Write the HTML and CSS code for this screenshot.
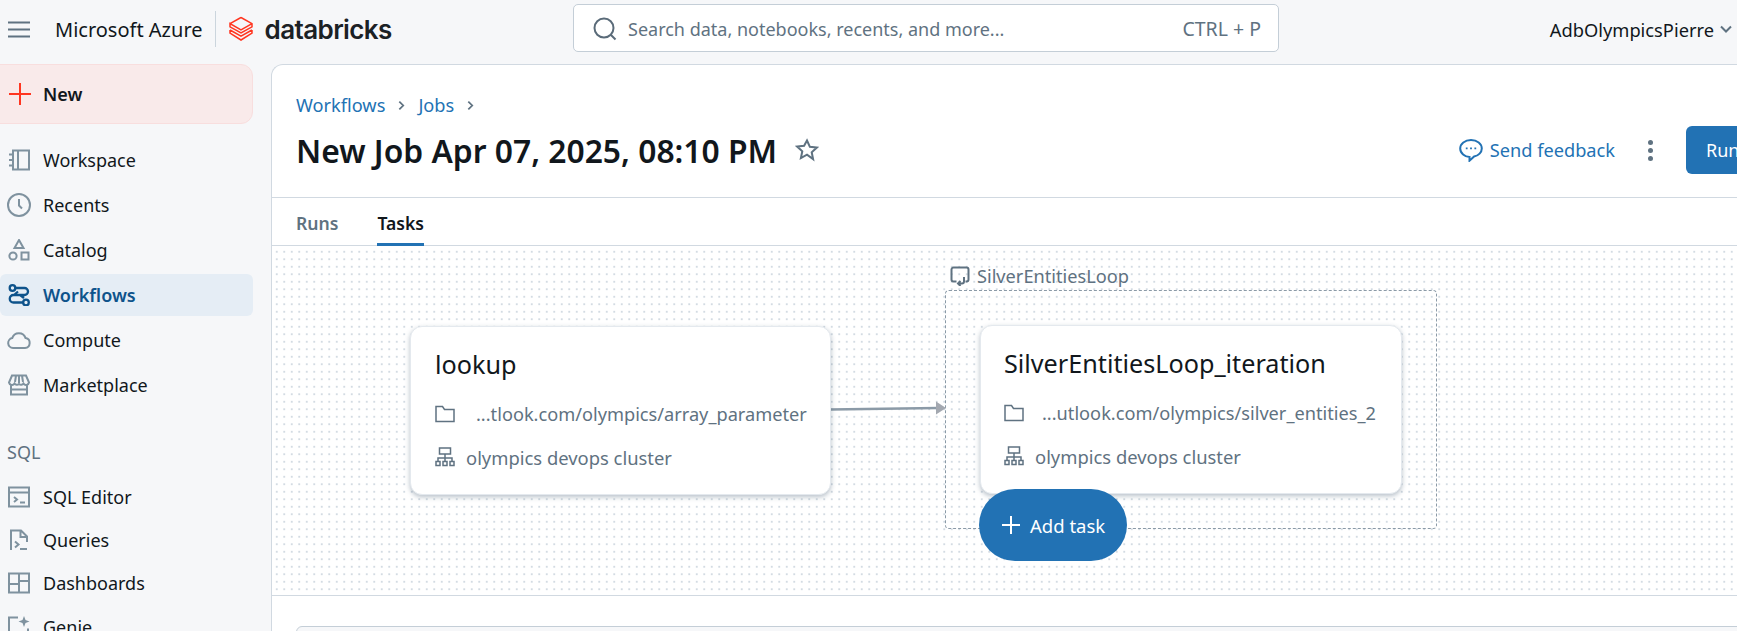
FILE: index.html
```html
<!DOCTYPE html>
<html lang="en">
<head>
  <meta charset="UTF-8" />
  <title>New Job Apr 07, 2025, 08:10 PM</title>
  <link rel="stylesheet" href="styles.css">
</head>
<body>
  <header class="topbar">
    <svg class="menu-icon" viewBox="0 0 22 17"><path d="M0 1.500h22M0 8.500h22M0 15.500h22"/></svg>
    <span class="azure">Microsoft Azure</span>
    <span class="divider"></span>
    <svg class="logo-icon" viewBox="0 0 24 26"><path d="M12 1.500 23 7.600v3.200L12 17 1 10.800V7.600L12 13.800 23 7.600M1 7.600 12 1.500M1 14l11 6.200L23 14M1 14v3.200l11 6.800 11-6.800V14"/></svg>
    <span class="brand">databricks</span>
    <div class="search">
      <svg class="search-icon" viewBox="0 0 24 24"><circle cx="11" cy="11" r="9.500"/><path d="m18 18 4.500 4.500"/></svg>
      <span class="search-text">Search data, notebooks, recents, and more...</span>
      <span class="search-key">CTRL + P</span>
    </div>
    <div class="user">
      <span>AdbOlympicsPierre</span>
      <svg class="user-chevron" viewBox="0 0 12 8"><path d="m1 1.500 5 5 5-5"/></svg>
    </div>
  </header>

  <div class="layout">
    <nav class="sidebar">
      <div class="new-btn">
        <svg class="new-plus" viewBox="0 0 22 22"><path d="M11 0v22M0 11h22"/></svg>
        <span>New</span>
      </div>

      <a class="nav-item">
        <svg class="nav-icon" viewBox="0 0 22 22"><path d="M5 1.500h16v19H5zM10 1.500v19M1 5.500h4M1 11h4M1 16.500h4"/></svg>
        <span>Workspace</span>
      </a>
      <a class="nav-item">
        <svg class="nav-icon large" viewBox="0 0 24 24"><circle cx="12" cy="12" r="11"/><path d="M12 6v6.500l3 3"/></svg>
        <span>Recents</span>
      </a>
      <a class="nav-item">
        <svg class="nav-icon" viewBox="0 0 22 22"><path d="m11 1 4.500 8h-9zM13.500 13.500h7v7h-7z"/><circle cx="5" cy="17" r="3.600"/></svg>
        <span>Catalog</span>
      </a>
      <a class="nav-item active">
        <svg class="nav-icon" viewBox="0 0 22 22"><circle cx="4.500" cy="4" r="2.800"/><circle cx="18" cy="18.500" r="2.800"/><path d="M7.500 4h9a3.500 3.500 0 0 1 0 7h-11a3.700 3.700 0 0 0 0 7.500h9.500M6 11l4-3.500M12 11l4 3"/></svg>
        <span>Workflows</span>
      </a>
      <a class="nav-item">
        <svg class="nav-icon large" viewBox="0 -3 24 24"><path d="M6 17a5 5 0 0 1-.8-9.900 7 7 0 0 1 13.400 0A5 5 0 0 1 18 17z"/></svg>
        <span>Compute</span>
      </a>
      <a class="nav-item">
        <svg class="nav-icon" viewBox="0 0 22 22"><path d="M4 1.500h14l3 7a3 3 0 0 1-5.500 1 3 3 0 0 1-4.500.5 3 3 0 0 1-4.500-.5A3 3 0 0 1 1 8.500zM3 11v9.500h16V11M3 15.500h16M8 1.500 7 8M14 1.500 15 8M11 1.500V9"/></svg>
        <span>Marketplace</span>
      </a>

      <div class="nav-heading">SQL</div>

      <a class="nav-item compact">
        <svg class="nav-icon" viewBox="0 0 22 22"><path d="M1 1.500h20v19H1zM1 6.500h20M6 11l3 2.500-3 2.500M12 16.500h5"/></svg>
        <span>SQL Editor</span>
      </a>
      <a class="nav-item compact">
        <svg class="nav-icon" viewBox="0 0 22 22"><path d="M3 21V1.500h10l6 6V13M12.500 1.500V8H19M7 12.500l3.500 3-3.500 3M12 20h7"/></svg>
        <span>Queries</span>
      </a>
      <a class="nav-item compact">
        <svg class="nav-icon" viewBox="0 0 22 22"><path d="M1 1.500h20v19H1zM11 1.500v19M1 12h10M11 9h10"/></svg>
        <span>Dashboards</span>
      </a>
      <a class="nav-item compact">
        <svg class="nav-icon" viewBox="0 0 22 22"><path d="M10 1.500H1v19h19v-8"/><path class="solid" d="m16 0 1.500 4L21.500 5.500 17.500 7 16 11l-1.500-4-4-1.500 4-1.500z"/></svg>
        <span>Genie</span>
      </a>
    </nav>

    <main class="main">
      <section class="job-header">
        <div class="crumbs">
          <a>Workflows</a>
          <svg class="crumb-sep" viewBox="0 0 8 12"><path d="m1.500 1.500 4.500 4.500-4.500 4.500"/></svg>
          <a>Jobs</a>
          <svg class="crumb-sep" viewBox="0 0 8 12"><path d="m1.500 1.500 4.500 4.500-4.500 4.500"/></svg>
        </div>
        <div class="title-row">
          <h1>New Job Apr 07, 2025, 08:10 PM</h1>
          <svg class="star" viewBox="0 0 24 24"><path d="m12 2.500 2.900 6.300 6.900.8-5.100 4.700 1.400 6.800L12 16.700l-6.100 3.400 1.400-6.800-5.100-4.700 6.900-.8z"/></svg>
          <div class="actions">
            <svg class="feedback-icon" viewBox="0 0 24 24"><path d="M12 2C5.900 2 1.200 5.700 1.200 10.500c0 4.700 4.700 8.400 9.300 8.400v3.800l4.600-4.200c4.400-.9 7.700-4.200 7.700-8C22.800 5.700 18.100 2 12 2z"/><path class="solid" d="M6.800 9.500h1.800v1.800H6.800zM11.100 9.500h1.800v1.800h-1.800zM15.400 9.500h1.800v1.800h-1.800z"/></svg>
            <a class="feedback">Send feedback</a>
            <span class="kebab"><i></i><i></i><i></i></span>
            <button class="run-btn">Run now</button>
          </div>
        </div>
      </section>

      <div class="tabs">
        <a class="tab">Runs</a>
        <a class="tab current">Tasks</a>
      </div>

      <section class="canvas">
        <div class="loop-label">
          <svg class="loop-icon" viewBox="0 0 20 20"><path d="M6.500 15.500H3.500a2 2 0 0 1-2-2V3.500a2 2 0 0 1 2-2h13a2 2 0 0 1 2 2v10a2 2 0 0 1-2 2h-1M14 11v4.500a2 2 0 0 1-2 2H8M10.500 15 8 17.500l2.500 2.500"/></svg>
          <span>SilverEntitiesLoop</span>
        </div>
        <div class="loop-box"></div>

        <svg class="edge" viewBox="0 0 120 14"><path d="M0 8.500 108 7"/><path class="head" d="m106 0.500 10 6.500-10 6.500z"/></svg>

        <article class="task node-lookup">
          <h2>lookup</h2>
          <div class="task-row first">
            <svg class="task-icon" viewBox="0 0 20 18"><path d="M1 16.500V1.500h6.500l2 3H19v12z"/></svg>
            <span class="path">...tlook.com/olympics/array_parameter</span>
          </div>
          <div class="task-row">
            <svg class="task-icon" viewBox="0 0 20 20"><path d="M4.500 1h11v6h-11zM10 7v4M3 14v-3h14v3M10 11v3"/><path d="M1 14.500h4v4H1zM8 14.500h4v4H8zM15 14.500h4v4h-4z"/></svg>
            <span class="cluster">olympics devops cluster</span>
          </div>
        </article>

        <article class="task node-iteration">
          <h2>SilverEntitiesLoop_iteration</h2>
          <div class="task-row first">
            <svg class="task-icon" viewBox="0 0 20 18"><path d="M1 16.500V1.500h6.500l2 3H19v12z"/></svg>
            <span class="path">...utlook.com/olympics/silver_entities_2</span>
          </div>
          <div class="task-row">
            <svg class="task-icon" viewBox="0 0 20 20"><path d="M4.500 1h11v6h-11zM10 7v4M3 14v-3h14v3M10 11v3"/><path d="M1 14.500h4v4H1zM8 14.500h4v4H8zM15 14.500h4v4h-4z"/></svg>
            <span class="cluster">olympics devops cluster</span>
          </div>
        </article>

        <button class="add-task">
          <svg class="add-plus" viewBox="0 0 18 18"><path d="M9 0v18M0 9h18"/></svg>
          <span>Add task</span>
        </button>
      </section>

      <section class="below">
        <div class="details-box"></div>
      </section>
    </main>
  </div>
</body>
</html>
```

FILE: styles.css
```css
* {
  box-sizing: border-box;
}
html, body {
  height: 100%;
}
body {
  margin: 0;
  overflow: hidden;
  background-color: #f6f7f9;
  color: #11171c;
  font-family: "Noto Sans", "Open Sans", Arial, sans-serif;
  font-size: 18px;
}
svg {
  display: block;
  flex: none;
  fill: none;
  stroke: currentColor;
  stroke-width: 2;
}
svg .solid {
  fill: currentColor;
  stroke: none;
}
a {
  color: inherit;
}

/* top bar */
.topbar {
  display: flex;
  align-items: center;
  height: 64px;
  padding-left: 8px;
  padding-bottom: 6px;
}
.menu-icon {
  width: 22px;
  height: 17px;
  color: #5f7281;
}
.azure {
  margin-left: 25px;
  font-size: 20px;
  white-space: nowrap;
}
.divider {
  width: 1px;
  height: 36px;
  margin: 0 13px 0 12px;
  background-color: #cbd5dd;
}
.logo-icon {
  width: 24px;
  height: 26px;
  color: #ff3621;
  stroke-width: 1.5;
}
.brand {
  margin-left: 12px;
  font-family: Inter, "Noto Sans", sans-serif;
  font-size: 26px;
  font-weight: 600;
  letter-spacing: -0.6px;
  color: #1b2125;
}
.search {
  display: flex;
  align-items: center;
  position: absolute;
  left: 573px;
  top: 4px;
  width: 706px;
  height: 48px;
  padding: 1px 17px 0 19px;
  background-color: #fff;
  border: 1px solid #c4ced7;
  border-radius: 5px;
  color: #5f7281;
}
.search-icon {
  width: 24px;
  height: 24px;
  color: #5a6b79;
}
.search-text {
  margin-left: 11px;
  font-size: 18px;
  white-space: nowrap;
}
.search-key {
  margin-left: auto;
  font-size: 19.500px;
}
.user {
  display: flex;
  align-items: center;
  margin-left: auto;
  padding-right: 5px;
  gap: 6px;
  font-size: 18.300px;
}
.user-chevron {
  width: 12px;
  height: 8px;
  color: #5f7281;
}

/* sidebar */
.layout {
  display: flex;
  height: 567px;
}
.sidebar {
  flex: none;
  width: 271px;
  padding-right: 18px;
}
.new-btn {
  display: flex;
  align-items: center;
  height: 60px;
  margin: 0 0 15px -1px;
  padding-left: 9px;
  gap: 12px;
  background-color: #f9eaea;
  border: 1px solid #f8dede;
  border-radius: 0 12px 12px 0;
  font-weight: 600;
}
.new-plus {
  width: 22px;
  height: 22px;
  color: #ff3621;
}
.nav-item {
  display: flex;
  align-items: center;
  height: 42px;
  margin-bottom: 3px;
  padding-left: 8px;
  gap: 13px;
  border-radius: 6px;
}
.nav-item.compact {
  height: 43.400px;
  margin-bottom: 0;
}
.nav-item.active {
  background-color: #e5edf5;
  color: #0e538b;
  font-weight: 600;
}
.nav-icon {
  width: 22px;
  height: 22px;
  color: #7f929f;
}
.nav-icon.large {
  width: 24px;
  height: 24px;
  margin: 0 -1px;
}
.nav-item.active .nav-icon {
  color: #0e538b;
  stroke-width: 2.300;
}
.nav-heading {
  margin: 34px 0 11px 7px;
  line-height: 24px;
  font-size: 18px;
  color: #5f7281;
}

/* main card */
.main {
  flex: none;
  width: 1560px;
  background-color: #fff;
  border-top: 1px solid #d1d9e1;
  border-left: 1px solid #d1d9e1;
  border-top-left-radius: 12px;
}
.job-header {
  height: 133px;
  padding: 26px 0 0 24px;
  border-bottom: 1px solid #d1d9e1;
}
.crumbs {
  display: flex;
  align-items: center;
  height: 28px;
  gap: 13px;
  font-size: 18.200px;
  color: #2272b4;
}
.crumb-sep {
  width: 7px;
  height: 11px;
  color: #5f7281;
}
.title-row {
  display: flex;
  align-items: center;
  margin-top: 7px;
  height: 48px;
}
h1 {
  margin: 0;
  font-size: 31.800px;
  font-weight: 600;
  white-space: nowrap;
}
.star {
  width: 24px;
  height: 24px;
  margin-left: 18px;
  color: #5f7281;
}
.actions {
  display: flex;
  align-items: center;
  margin-left: auto;
}
.feedback-icon {
  width: 24px;
  height: 24px;
  color: #2272b4;
}
.feedback {
  margin-left: 7px;
  font-size: 18.200px;
  color: #2272b4;
}
.kebab {
  display: flex;
  flex-direction: column;
  gap: 3px;
  margin: 0 33px 0 33px;
}
.kebab i {
  display: block;
  width: 5px;
  height: 5px;
  border-radius: 50%;
  background-color: #5f7281;
}
.run-btn {
  width: 145px;
  height: 48px;
  border: none;
  border-radius: 6px;
  background-color: #2272b4;
  color: #fff;
  font: inherit;
  text-align: left;
  padding-left: 20px;
}
.tabs {
  display: flex;
  height: 48px;
  padding-left: 24px;
  gap: 39px;
  border-bottom: 1px solid #d1d9e1;
  font-size: 17.600px;
  font-weight: 600;
}
.tab {
  padding-top: 13px;
  color: #5f7281;
}
.tab.current {
  color: #11171c;
  border-bottom: 3px solid #2272b4;
  height: 48px;
}

/* canvas with the task graph */
.canvas {
  position: relative;
  height: 350px;
  border-bottom: 1px solid #d1d9e1;
  background-color: #fff;
  background-image: radial-gradient(circle, #d3dbe3 1px, transparent 1.300px);
  background-size: 7.500px 7.500px;
  background-position: 1px 2px;
}
.loop-label {
  position: absolute;
  left: 678px;
  top: 18px;
  display: flex;
  align-items: center;
  gap: 7px;
  font-size: 18.200px;
  color: #5f7281;
}
.loop-icon {
  width: 20px;
  height: 20px;
  color: #5f7281;
}
.loop-box {
  position: absolute;
  left: 673px;
  top: 44px;
  width: 492px;
  height: 239px;
  border: 1px dashed #8b9aa7;
  border-radius: 4px;
}
.edge {
  position: absolute;
  left: 558px;
  top: 155px;
  width: 120px;
  height: 14px;
  color: #8b9aa7;
  stroke-width: 2.500;
}
.edge .head {
  fill: #a3a8b0;
  stroke: none;
}
.task {
  position: absolute;
  background-color: #fff;
  border-radius: 12px;
  border: 1px solid #e4e9ee;
  box-shadow: 0 2px 5px rgba(50, 75, 100, 0.35);
}
.node-lookup {
  left: 138px;
  top: 80px;
  width: 421px;
  height: 169px;
  padding: 19px 0 0 24px;
}
.node-iteration {
  left: 708px;
  top: 79px;
  width: 422px;
  height: 169px;
  padding: 19px 0 0 23px;
}
.task h2 {
  margin: 0;
  font-size: 25.200px;
  font-weight: 400;
  line-height: 36px;
  white-space: nowrap;
}
.task-row {
  display: flex;
  align-items: center;
  height: 26px;
  margin-top: 17px;
  color: #5f7281;
  font-size: 18.200px;
  white-space: nowrap;
}
.task-row.first {
  margin-top: 19px;
}
.task-icon {
  width: 20px;
  height: 20px;
  stroke-width: 1.500;
}
.path {
  margin-left: 21px;
}
.node-iteration .path {
  margin-left: 18px;
}
.cluster {
  margin-left: 11px;
  font-size: 18.400px;
}
.add-task {
  position: absolute;
  left: 707px;
  top: 243px;
  display: flex;
  align-items: center;
  gap: 10px;
  width: 148px;
  height: 72px;
  padding-left: 23px;
  border: none;
  border-radius: 36px;
  background-color: #2272b4;
  color: #fff;
  font: inherit;
  font-size: 18.500px;
}
.add-plus {
  width: 18px;
  height: 18px;
}

/* part of the page below the graph */
.below {
  padding: 30px 0 0 24px;
}
.details-box {
  height: 60px;
  background-color: #f6f7f9;
  border: 1px solid #c4ced7;
  border-radius: 6px;
}
```
